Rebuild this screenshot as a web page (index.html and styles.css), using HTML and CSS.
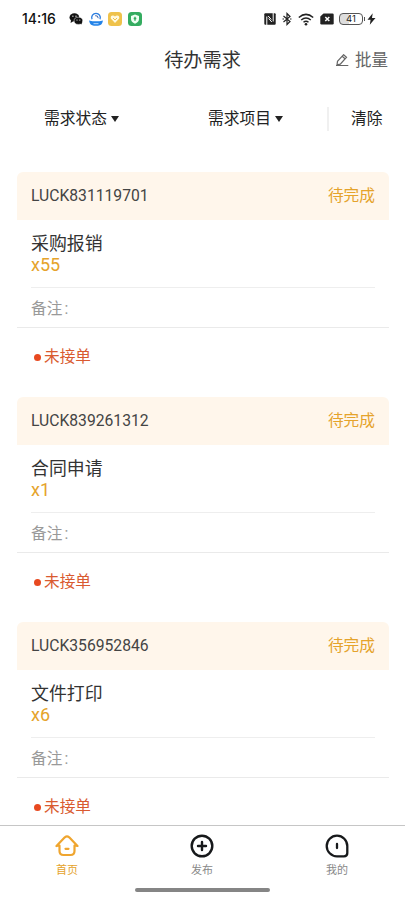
FILE: index.html
```html
<!DOCTYPE html>
<html lang="zh-CN">
<head>
<meta charset="utf-8">
<title>待办需求</title>
<link rel="stylesheet" href="styles.css">
</head>
<body>
<div class="app">
  <div class="status">
    <span class="time">14:16</span>
    <div class="apps">
      <svg width="14" height="14" viewBox="0 0 14 14"><ellipse cx="5.4" cy="5.4" rx="4.9" ry="4.2" fill="#111"/><path d="M2 8L1.6 11L4.5 9Z" fill="#111"/><ellipse cx="9.4" cy="8.8" rx="4.3" ry="3.6" fill="#111" stroke="#fff" stroke-width=".5"/><path d="M11 11l1.6 1.6V10Z" fill="#111"/><g fill="#fff"><circle cx="3.9" cy="4.2" r=".65"/><circle cx="7" cy="4.2" r=".65"/><circle cx="8" cy="8" r=".6"/><circle cx="10.8" cy="8" r=".6"/></g></svg>
      <svg width="14" height="14" viewBox="0 0 14 14"><path d="M3 7.200A4.300 4.300 0 1 1 11 7.200" fill="none" stroke="#2b7de0" stroke-width="1.300"/><path d="M6.200 3.700A2.600 2.600 0 0 1 9.200 6.200" fill="none" stroke="#284f9e" stroke-width=".9"/><path d="M0 8.500Q7 10.200 14 8.500Q13 13.700 9 13.700H5Q1 13.700 0 8.500Z" fill="#2483e8"/><path d="M4.500 11.700H9.500" stroke="#b9dcff" stroke-width="1"/></svg>
      <svg width="14" height="14" viewBox="0 0 14 14"><rect width="14" height="14" rx="3.5" fill="#efc24b"/><path d="M7 11L2.800 6.600Q2.300 3.500 4.800 3.500Q6.200 3.500 7 4.600Q7.800 3.500 9.200 3.500Q11.700 3.500 11.200 6.600Z" fill="#fff9df"/><path d="M5 6L7 8L9 6" fill="none" stroke="#efc24b"/></svg>
      <svg width="14" height="14" viewBox="0 0 14 14"><rect width="14" height="14" rx="3.5" fill="#34ac60"/><path d="M7 2.500L11 4V7Q11 10 7 11.800Q3 10 3 7V4Z" fill="#effff3"/><path d="M7 4.800V8.800M5.700 6.500H8.300" stroke="#34ac60" stroke-width="1.400"/></svg>
    </div>
    <div class="system">
      <svg width="12" height="12" viewBox="0 0 12 12"><rect x=".3" y=".3" width="11.400" height="11.400" rx="1" fill="#222"/><path d="M2.800 12V3.500M4.200 3L7.300 6.500M9.200 0V8.500M7.800 9L4.700 5.500" fill="none" stroke="#fff" stroke-width="1"/></svg>
      <svg class="bluetooth" width="10" height="14" viewBox="0 0 10 14"><path d="M1.500 4L8 9.500L5 12.500V1.500L8 4.500L1.500 10" fill="none" stroke="#222" stroke-width="1.200"/><path d="M.5 7H2M8 7H9.500" stroke="#222" stroke-width="1.200"/></svg>
      <svg class="wifi" width="16" height="13" viewBox="0 0 16 13"><path d="M.8 4.500Q8-1.800 15.200 4.500M3.200 7Q8 3 12.800 7M5.500 9.300Q8 7.200 10.500 9.300" fill="none" stroke="#222" stroke-width="1.500"/><circle cx="8" cy="11.300" r="1.300" fill="#222"/></svg>
      <svg class="sim" width="14" height="12" viewBox="0 0 14 12"><path d="M3.500 .5H12.500Q13.700 .5 13.700 1.700V10.300Q13.700 11.500 12.500 11.500H1.500Q.3 11.500 .3 10.300V3.500Z" fill="#222"/><path d="M5.300 4L9.300 8M9.300 4L5.300 8" stroke="#fff" stroke-width="1.500"/></svg>
      <span class="battery">41</span>
      <svg class="bolt" width="9" height="12" viewBox="0 0 9 12"><path d="M5.700 .3L.5 6.700H3.600L2.800 11.700L8.500 5H5Z" fill="#222"/></svg>
    </div>
  </div>
  <header class="header">
    <h1>待办需求</h1>
    <div class="batch"><svg width="14" height="14" viewBox="0 0 14 14" fill="none" stroke="#666" stroke-width="1.200"><path d="M2 10.800L2.500 7.300L8.600 .7L11.500 3.200L5.300 10.200ZM7.200 2.300L10 4.800M1 11.500H13.300"/></svg><span>批量</span></div>
  </header>
  <div class="filters">
    <div class="filter first">需求状态<i class="arrow"></i></div>
    <div class="filter second">需求项目<i class="arrow"></i></div>
    <div class="clear">清除</div>
  </div>
  <main class="list">
    <section class="card">
      <div class="card-head"><span>LUCK831119701</span><b>待完成</b></div>
      <div class="task"><h2>采购报销</h2><div class="count">x55</div></div>
      <div class="note">备注<span class="colon">:</span></div>
      <div class="state"><i></i>未接单</div>
    </section>
    <section class="card">
      <div class="card-head"><span>LUCK839261312</span><b>待完成</b></div>
      <div class="task"><h2>合同申请</h2><div class="count">x1</div></div>
      <div class="note">备注<span class="colon">:</span></div>
      <div class="state"><i></i>未接单</div>
    </section>
    <section class="card">
      <div class="card-head"><span>LUCK356952846</span><b>待完成</b></div>
      <div class="task"><h2>文件打印</h2><div class="count">x6</div></div>
      <div class="note">备注<span class="colon">:</span></div>
      <div class="state"><i></i>未接单</div>
    </section>
  </main>
  <nav class="tabs">
    <div class="tab active"><svg width="24" height="24" viewBox="0 0 24 24" fill="none" stroke="#efa52f" stroke-width="2.200" stroke-linecap="round" stroke-linejoin="round"><path d="M1.500 12L9.800 3.300Q12 1.600 14.200 3.300L22.500 12L19.500 11.500V17Q19.500 21 15.500 21H8.500Q4.500 21 4.500 17V11.500L1.500 12M10.500 14.800H13.500"/></svg><span>首页</span></div>
    <div class="tab"><svg width="24" height="24" viewBox="0 0 24 24" fill="none" stroke="#17191b" stroke-width="2.400" stroke-linecap="round"><circle cx="12" cy="12" r="10.300"/><path d="M12 8V16M8 12H16"/></svg><span>发布</span></div>
    <div class="tab"><svg width="24" height="24" viewBox="0 0 24 24" fill="none" stroke="#17191b" stroke-width="2.300" stroke-linecap="round" stroke-linejoin="round"><path d="M12 1.700A10.300 10.300 0 0 0 12 22.300H19Q22.300 22.300 22.300 19V12A10.300 10.300 0 0 0 12 1.700ZM12 10V14"/></svg><span>我的</span></div>
  </nav>
  <div class="gesture"></div>
</div>
</body>
</html>
```
FILE: styles.css
```css
* { box-sizing: border-box; }
body { margin: 0; background: #fff; color: #333; font-family: Roboto, "Noto Sans CJK SC", sans-serif; }
svg { display: block; flex: none; }
h1, h2 { margin: 0; font-weight: 400; }
.app { display: flex; flex-direction: column; height: 900px; overflow: hidden; }
.status { display: flex; align-items: center; height: 38px; flex: none; padding: 0 29px 0 22px; }
.time { width: 47px; color: #111; font: 500 14px/20px Inter, sans-serif; }
.apps { display: flex; gap: 5.500px; }
.system { display: flex; align-items: center; margin-left: auto; }
.bluetooth { margin-left: 6px; }
.wifi { margin-left: 6px; }
.sim { margin-left: 6px; }
.battery { position: relative; width: 24px; height: 12px; margin: 0 4px 0 5px; border: 1px solid #555; border-radius: 4px; background: linear-gradient(90deg, #ddd 41%, #fff 41%); color: #222; font: 9.500px/10px Inter, sans-serif; text-align: center; }
.battery::after { content: ""; position: absolute; right: -3px; top: 3px; width: 1px; height: 4px; background: #555; }
.header { display: grid; grid-template-columns: 1fr auto 1fr; align-items: center; height: 42px; flex: none; padding: 4px 17px 0; }
.header h1 { grid-column: 2; font-size: 19.200px; line-height: 28px; }
.batch { display: flex; align-items: center; justify-content: flex-end; gap: 6px; color: #666; font-size: 16.500px; line-height: 26px; }
.filters { display: flex; align-items: center; height: 76px; flex: none; padding: 1px 0 0 44px; color: #222; font-size: 15.750px; line-height: 24px; }
.filter { display: flex; align-items: center; }
.first { width: 164px; }
.second { width: 119px; }
.arrow { width: 0; height: 0; margin-left: 4px; border: 4px solid transparent; border-top: 6px solid #222; border-bottom: 0; }
.clear { border-left: 2px solid #f0f0f0; padding-left: 22px; }
.list { flex: 1; min-height: 0; overflow: hidden; padding: 16px 16px 0 17px; }
.card { height: 225px; }
.card-head { display: flex; align-items: center; justify-content: space-between; height: 48px; padding: 0 14px 2px; border-radius: 6px 6px 0 0; background: #fff6eb; color: #444; font-size: 15.700px; }
.card-head b { padding-bottom: 2px; color: #e5a32b; font-weight: 400; }
.task { height: 68px; margin: 0 14px; padding-top: 12px; border-bottom: 1px solid #eee; }
.task h2 { font-size: 17.900px; line-height: 24px; }
.count { color: #e5a32b; font-size: 18px; line-height: 17px; }
.note { height: 40px; padding: 0 14px; border-bottom: 1px solid #eaeaea; color: #999; font-size: 15.700px; line-height: 41px; }
.colon { margin-left: 2px; }
.state { display: flex; align-items: center; height: 55px; padding-left: 17px; color: #d95a30; font-size: 15.700px; }
.state i { width: 7px; height: 7px; margin: 4px 3px 0 0; border-radius: 50%; background: #e84920; }
.tabs { display: grid; grid-template-columns: repeat(3, 1fr); height: 60px; flex: none; border-top: 1px solid #c6c6c6; }
.tab { display: flex; flex-direction: column; align-items: center; padding: 8px 1px 0 0; color: #888; font-size: 11px; line-height: 16px; gap: 5px; }
.active { color: #e5a32b; }
.gesture { width: 135px; height: 4px; margin: 3px auto 8px; flex: none; border-radius: 2px; background: #858585; }
```
